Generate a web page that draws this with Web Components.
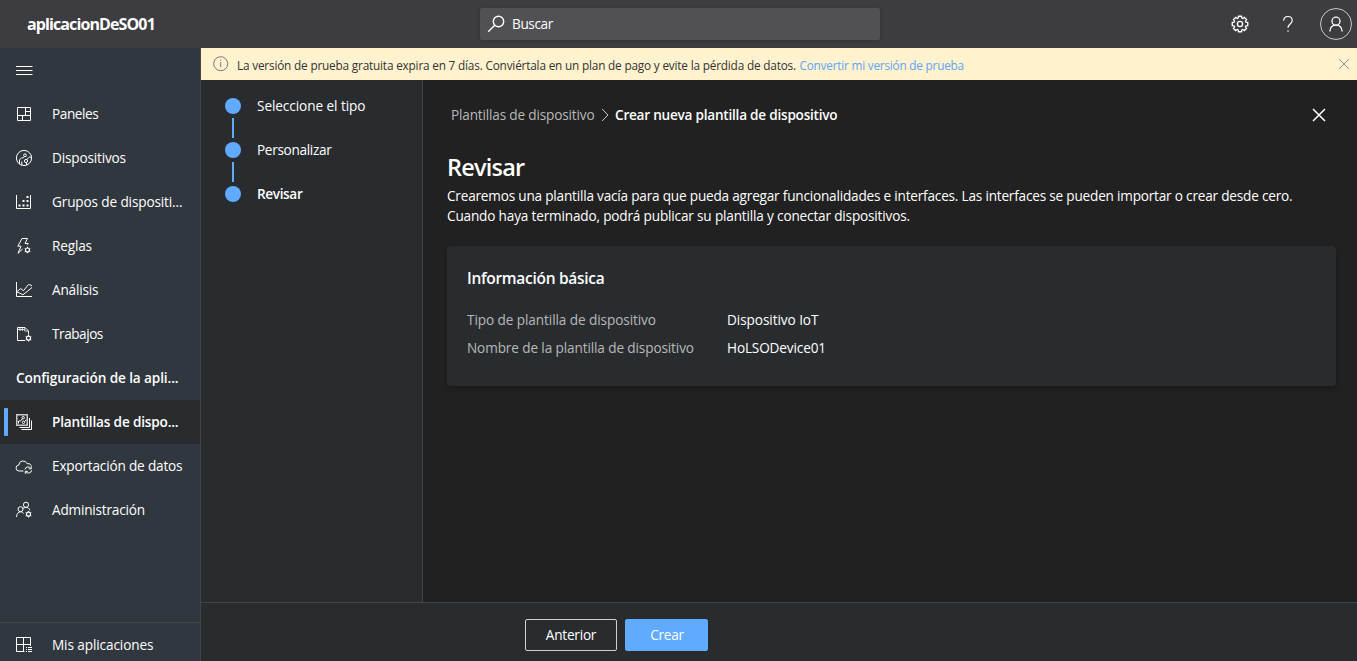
<!DOCTYPE html>
<html lang="es">
<head>
<meta charset="utf-8">
<title>aplicacionDeSO01</title>
<style>
html,body{margin:0;height:100%;overflow:hidden;background:#212121}
body{font-family:"Open Sans","Noto Sans",sans-serif;font-size:13.6px;color:#fff}
</style>
</head>
<body>
<iot-app></iot-app>
<script>
const define=(name,html,after)=>{
  const t=document.createElement('template');
  t.innerHTML=html;
  customElements.define(name,class extends HTMLElement{
    connectedCallback(){
      if(this.shadowRoot)return;
      this.attachShadow({mode:'open'}).append(t.content.cloneNode(true));
      if(after)after(this,this.shadowRoot);
    }
  });
};

/* Single line label that spreads its letters over a given width. */
define('fit-text','<style>:host{display:inline-block;white-space:nowrap;flex:none}span{display:inline-block}</style><span><slot></slot></span>',(el,root)=>{
  const w=+el.getAttribute('w'),s=root.querySelector('span');
  el.style.width=w+'px';
  const natural=s.getBoundingClientRect().width;
  s.style.letterSpacing=((w-.6-natural)/el.textContent.length).toFixed(4)+'px';
});

const gear=(cx,cy,r)=>{
  let o='';
  for(let i=0;i<8;i++){
    const a=i*Math.PI/4;
    [[-.3,.78],[-.2,1],[.2,1],[.3,.78]].forEach(([d,k])=>{
      o+=(o?'L':'M')+(cx+Math.sin(a+d)*r*k).toFixed(2)+' '+(cy-Math.cos(a+d)*r*k).toFixed(2);
    });
  }
  return `<path d="${o}Z"/><circle cx="${cx}" cy="${cy}" r="${(r*.33).toFixed(2)}"/>`;
};
const smallGear=(cx,cy)=>`<circle cx="${cx}" cy="${cy}" r="2" stroke-width="1.2"/><path d="M${cx} ${cy-3.2}v1.200M${cx} ${cy+2}v1.200M${cx-2.8} ${cy-1.6}l1 .6M${cx+1.8} ${cy+1}l1 .6M${cx-2.8} ${cy+1.6}l1-.6M${cx+1.8} ${cy-1}l1-.6"/>`;
const icons={
  menu:'<path d="M4 8.500h16.500M4 12.500h16.500M4 16.500h16.500"/>',
  panels:'<path d="M5.500 5.500h13v13h-13zM13.500 5.500v8.500M5.500 13.500h13M13.500 9.500h5M10.500 13.500v5"/>',
  device:'<circle cx="12" cy="12" r="7.600"/><path d="M7.500 18v-4.300l2-1.800h1.600l1-1.200M9.800 19v-3.500M15 13.300l2.300-2.200h2M14.500 17v2"/><circle cx="13" cy="9.300" r="1.400"/><circle cx="14" cy="15" r="1.600"/>',
  groups:'<path d="M4.500 5v13.500h14V5"/><g fill="currentColor" stroke="none"><path d="M6.500 14.500h2v2h-2zM10.500 14.500h2v2h-2zM14.500 14.500h2v2h-2zM10.500 10h2v2h-2zM14.500 10h2v2h-2zM14.500 6h2v2h-2z"/></g>',
  rules:'<path d="M15.500 10.800l.8-1.400h-3.300l2.500-4.900H10L5.800 12.200h3.200L6 19.300l4.600-4.300"/>'+smallGear(15.5,16),
  analysis:'<path d="M4.500 4v14.500h15.500M4.800 13.800l3.900-3.300 2.700 2.200 5-6h1.500l2.200 1.200M4.800 13.800l6.200 3 9-7.300"/>',
  jobs:'<path d="M13 18.500h-7.500v-13h7.500l3.500 3.500v3.500"/><path d="M6 7.500h6.500M8 5.500v3.500M10.300 5.500v3.500M12.700 5.500v3.500h3.500" stroke-width=".8"/>'+smallGear(16.5,16.2),
  templates:'<rect x="4.750" y="4.750" width="10.500" height="10.500" stroke="#c8c8c8" stroke-width="1.500"/><path d="M17.500 8v9.500H7.500M19.500 10.500v9H9.500"/><circle cx="11.200" cy="7.700" r="1.200"/><circle cx="11.500" cy="12.300" r="1.200"/><path d="M6.500 13.500v-2.500h2l1.800-2.200M12.500 11.400l2-1.600"/>',
  cloud:'<path d="M11.500 17H7.300a3 3 0 0 1-.5-6 4.300 4.300 0 0 1 8.300-1.300 3.600 3.600 0 0 1 4.300 2.100"/><path d="M13 15.500a3.100 3.100 0 0 1 5.800-1M19.200 12.300v2.500h-2.500M19.600 16.300a3.100 3.100 0 0 1-5.800 1.200M13.300 19.800v-2.400h2.500"/>',
  admin:'<circle cx="14" cy="6.800" r="2.600"/><circle cx="8.500" cy="11.200" r="2.500"/><path d="M4.500 19c.2-3.300 1.800-5.200 4-5.200 1.400 0 2.500.6 3.200 1.800M11 10.400c.8-.6 1.900-1 3-1 2 0 3.500 1.200 3.900 3"/>'+smallGear(16.5,16.2),
  apps:'<path d="M4.500 4.500h14v8.500M12.500 18.500H4.500v-14M11.500 4.500v14M4.500 11.500h14M14 14.500h1M16 14.500h4M14 16.500h1M16 16.500h4M14 18.500h1M16 18.500h4"/>',
  search:'<circle cx="14.500" cy="9.500" r="5.200"/><path d="M10.700 13.300L4.200 19.800"/>',
  settings:gear(12,12,7.9),
  help:'<path d="M7.700 8.800c0-2.600 1.800-4.300 4.300-4.300s4.200 1.500 4.200 3.900c0 3.400-4.200 3.800-4.200 7.400"/><path d="M12 18.300v1.500"/>',
  user:'<circle cx="12" cy="9.200" r="4"/><path d="M5.800 19.500c.3-3.800 2.800-6.300 6.200-6.300s5.900 2.500 6.200 6.300"/>',
  info:'<circle cx="11.700" cy="11.700" r="7"/><path d="M11.700 10.200v5M11.700 7.700v1.200"/>',
  x:'<path d="M6 6l12 12M18 6L6 18"/>',
  chevron:'<path d="M9.200 6l5.700 6-5.700 6"/>'
};
define('ui-icon','<style>:host{display:block;flex:none;width:24px;height:24px}svg{display:block;width:100%;height:100%;fill:none;stroke:currentColor;stroke-width:var(--stroke,1)}</style><svg viewBox="0 0 24 24"></svg>',(el,root)=>{
  root.querySelector('svg').innerHTML=icons[el.getAttribute('name')];
});

define('nav-item',`<style>
:host{display:flex;align-items:center;height:44px;padding-left:12px;box-sizing:border-box;position:relative;color:#fff;flex:none}
.label{padding-left:16px;line-height:20px}
:host([selected]){background:#292c2f;font-weight:600}
:host([selected])::before{content:"";position:absolute;left:4px;top:8px;width:4px;height:28px;border-radius:1px;background:#60aaff}
:host([heading]){padding-left:0;font-weight:600}
:host([heading]) slot[name=icon]{display:none}
</style><slot name="icon"></slot><div class="label"><slot></slot></div>`);

define('side-nav',`<style>
:host{display:flex;flex-direction:column;width:200px;background:#31373e;border-right:1px solid #444;overflow:hidden}
.space{flex:1}
.foot{height:38px;border-top:1px solid #464646;overflow:hidden}
</style>
<nav-item><ui-icon slot="icon" name="menu"></ui-icon></nav-item>
<nav-item><ui-icon slot="icon" name="panels"></ui-icon><fit-text w="47">Paneles</fit-text></nav-item>
<nav-item><ui-icon slot="icon" name="device"></ui-icon><fit-text w="74.500">Dispositivos</fit-text></nav-item>
<nav-item><ui-icon slot="icon" name="groups"></ui-icon><fit-text w="131">Grupos de dispositi...</fit-text></nav-item>
<nav-item><ui-icon slot="icon" name="rules"></ui-icon><fit-text w="40.500">Reglas</fit-text></nav-item>
<nav-item><ui-icon slot="icon" name="analysis"></ui-icon><fit-text w="47">Análisis</fit-text></nav-item>
<nav-item><ui-icon slot="icon" name="jobs"></ui-icon><fit-text w="51.500">Trabajos</fit-text></nav-item>
<nav-item heading><fit-text w="163">Configuración de la apli...</fit-text></nav-item>
<nav-item selected><ui-icon slot="icon" name="templates"></ui-icon><fit-text w="127">Plantillas de dispo...</fit-text></nav-item>
<nav-item><ui-icon slot="icon" name="cloud"></ui-icon><fit-text w="131">Exportación de datos</fit-text></nav-item>
<nav-item><ui-icon slot="icon" name="admin"></ui-icon><fit-text w="93.500">Administración</fit-text></nav-item>
<div class="space"></div>
<div class="foot"><nav-item><ui-icon slot="icon" name="apps"></ui-icon><fit-text w="102">Mis aplicaciones</fit-text></nav-item></div>`);

define('top-bar',`<style>
:host{display:grid;grid-template-columns:480px 400px 1fr;align-items:center;height:48px;background:#3d3c41;color:#fff}
.brand{padding-left:27px;font-size:16px;font-weight:700;line-height:24px}
.search{display:flex;align-items:center;height:32px;background:#515054;border-radius:2px;padding-left:4px;box-sizing:border-box;box-shadow:0 1px 4px #0003}
.search fit-text{padding-left:4px;line-height:20px}
.tools{display:flex;justify-content:flex-end;align-items:center;padding-right:5px}
.tools ui-icon{margin-right:24px}
.tools .avatar{width:32px;height:32px;margin-left:-4px;border:1px solid #c8c8c8;border-radius:50%;box-sizing:border-box;display:grid;place-items:center}
.avatar ui-icon{margin:0}
</style>
<div class="brand"><fit-text w="128.500">aplicacionDeSO01</fit-text></div>
<div class="search"><ui-icon name="search" style="--stroke:1.4"></ui-icon><fit-text w="41.500">Buscar</fit-text></div>
<div class="tools"><ui-icon name="settings" style="--stroke:1.300"></ui-icon><ui-icon name="help" style="--stroke:1.200"></ui-icon><div class="avatar"><ui-icon name="user" style="--stroke:1.300"></ui-icon></div></div>`);

define('trial-banner',`<style>
:host{display:flex;align-items:center;height:32px;background:#fff2cf;font-size:11.800px;line-height:18px;padding:0 1px 0 8px;color:#333}
ui-icon{color:#777}
.msg{padding:2px 3px 0 4px}
.link{padding-top:2px;color:#60a5f5}
.close{margin-left:auto;width:20px;height:20px;margin-right:2px}
</style>
<ui-icon name="info"></ui-icon><fit-text class="msg" w="559.500">La versión de prueba gratuita expira en 7 días. Conviértala en un plan de pago y evite la pérdida de datos.</fit-text><fit-text class="link" w="165">Convertir mi versión de prueba</fit-text><ui-icon class="close" name="x"></ui-icon>`);

define('wizard-step',`<style>
:host{display:grid;grid-template-columns:16px auto;column-gap:16px;height:44px;align-content:start;justify-content:start;line-height:16px}
.dot{width:16px;height:16px;border-radius:50%;background:#60aaff}
.line{width:2px;height:20px;margin:4px 7px;background:#60aaff}
:host([current]){font-weight:600}
:host([current]) .line{display:none}
</style><div class="dot"></div><slot></slot><div class="line"></div>`);

define('wizard-steps',`<style>:host{display:block;width:221px;box-sizing:content-box;background:#292c2f;border-right:1px solid #444}.list{padding:18px 0 0 24px}</style>
<div class="list"><wizard-step><fit-text w="109">Seleccione el tipo</fit-text></wizard-step><wizard-step><fit-text w="75">Personalizar</fit-text></wizard-step><wizard-step current><fit-text w="46">Revisar</fit-text></wizard-step></div>`);

define('info-card',`<style>
:host{display:block;height:140px;box-sizing:border-box;padding:20px;background:#292c2f;border-radius:4px;box-shadow:0 2px 5px #0004}
h2{margin:0;font-size:15.500px;font-weight:600;line-height:24px;height:24px}
dl{display:grid;grid-template-columns:260px auto;justify-content:start;grid-auto-rows:28px;line-height:28px;margin:16px 0 0}
dt{color:#b8b8b8}dd{margin:0}
</style>
<h2><fit-text w="138">Información básica</fit-text></h2>
<dl><dt><fit-text w="189.500">Tipo de plantilla de dispositivo</fit-text></dt><dd><fit-text w="92">Dispositivo IoT</fit-text></dd><dt><fit-text w="227.500">Nombre de la plantilla de dispositivo</fit-text></dt><dd><fit-text w="99.500">HoLSODevice01</fit-text></dd></dl>`);

define('review-page',`<style>
:host{display:block;padding:23px 21px 0 24px;background:#212121;min-width:0}
.crumbs{display:flex;align-items:center;height:24px;line-height:20px;padding-left:4px}
.crumbs .from{color:#b8b8b8}
.crumbs .sep{width:20px;height:24px;color:#ccc}
.crumbs .sep ui-icon{margin:0 -2px}
.crumbs .to{font-weight:600}
.crumbs .close{margin-left:auto;margin-right:5px}
h1{margin:24px 0 0;font-size:23.500px;font-weight:600;line-height:32px;height:35px}
p{margin:0 0 20px;line-height:20px}
p fit-text{display:block}
</style>
<div class="crumbs"><fit-text class="from" w="144">Plantillas de dispositivo</fit-text><span class="sep"><ui-icon name="chevron"></ui-icon></span><fit-text class="to" w="223">Crear nueva plantilla de dispositivo</fit-text><ui-icon class="close" name="x" style="--stroke:1.500"></ui-icon></div>
<h1><fit-text w="78">Revisar</fit-text></h1>
<p><fit-text w="846">Crearemos una plantilla vacía para que pueda agregar funcionalidades e interfaces. Las interfaces se pueden importar o crear desde cero.</fit-text><fit-text w="463.500">Cuando haya terminado, podrá publicar su plantilla y conectar dispositivos.</fit-text></p>
<info-card></info-card>`);

define('ui-button',`<style>
:host{display:block}
button{font:inherit;color:#fff;display:flex;align-items:center;justify-content:center;width:92px;height:32px;padding:0 0 1px;border:1px solid #d0d0d0;border-radius:2px;background:transparent}
:host([primary]) button{width:83px;padding-left:1px;border-color:#60aaff;background:#60aaff}
</style><button><slot></slot></button>`);

define('iot-app',`<style>
:host{display:grid;grid-template-rows:48px 1fr;height:100vh;width:100vw}
.body{display:grid;grid-template-columns:201px 1fr;min-height:0}
.main{display:grid;grid-template-rows:32px 1fr 59px;min-width:0;min-height:0}
.work{display:grid;grid-template-columns:222px 1fr;min-height:0}
.actions{display:flex;gap:8px;padding:16px 0 0 324px;background:#292c2f;border-top:1px solid #444;box-sizing:border-box}
</style>
<top-bar></top-bar>
<div class="body"><side-nav></side-nav><div class="main"><trial-banner></trial-banner>
<div class="work"><wizard-steps></wizard-steps><review-page></review-page></div>
<div class="actions"><ui-button><fit-text w="51">Anterior</fit-text></ui-button><ui-button primary><fit-text w="34">Crear</fit-text></ui-button></div></div></div>`);
</script>
</body>
</html>
